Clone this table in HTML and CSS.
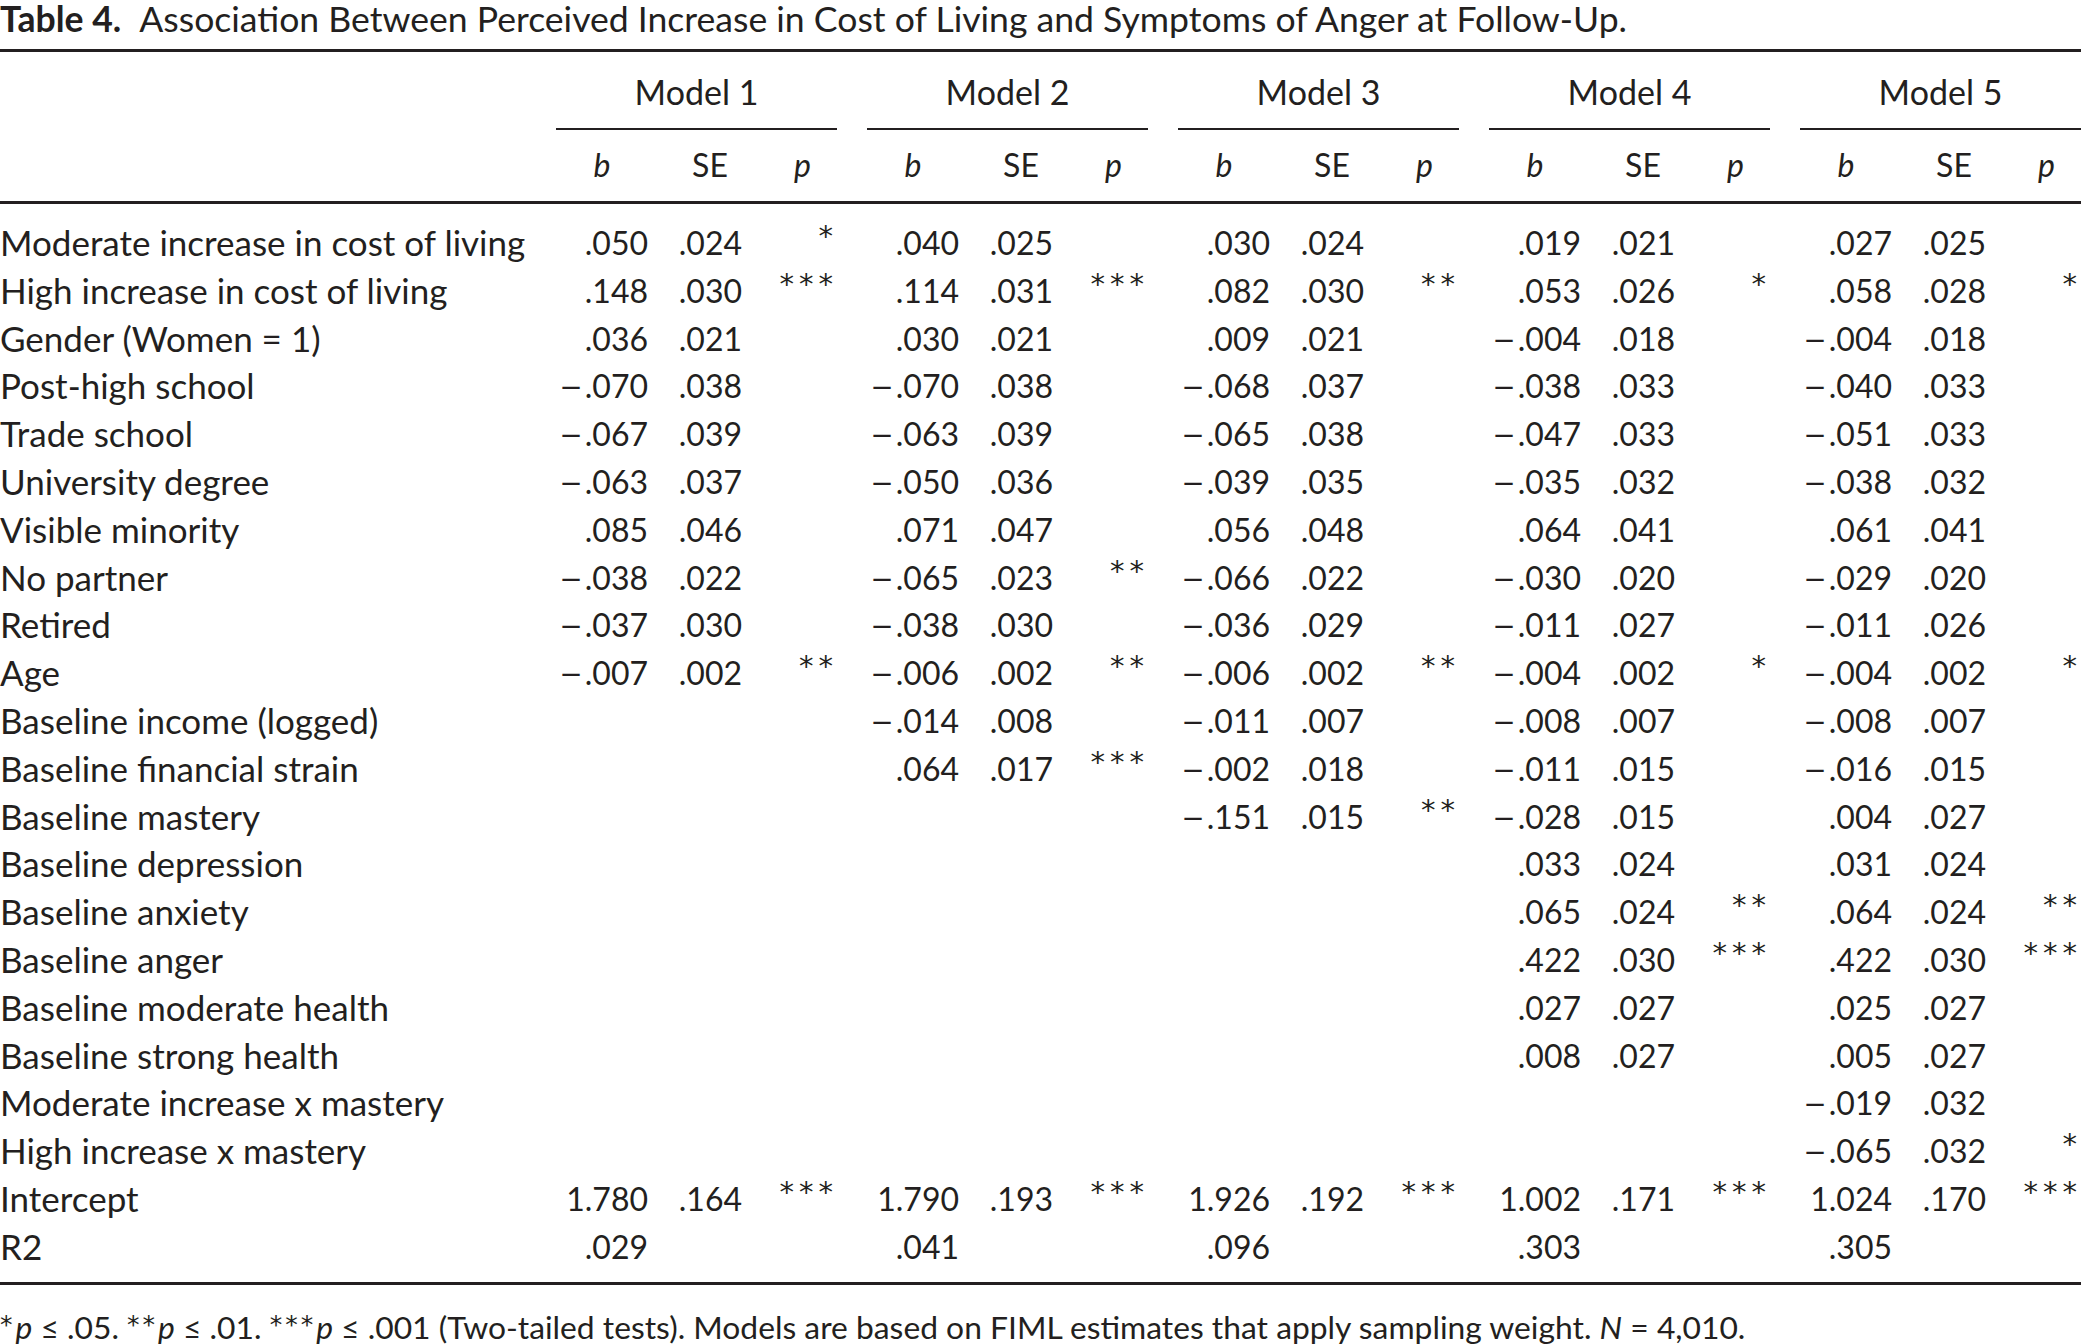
FILE: index.html
```html
<!DOCTYPE html>
<html lang="en">
<head>
<meta charset="utf-8">
<title>Table 4</title>
<link rel="stylesheet" href="styles.css">
</head>
<body>
<div class="page">
  <div class="caption"><span class="caption-label">Table 4.</span>Association Between Perceived Increase in Cost of Living and Symptoms of Anger at Follow-Up.</div>
  <div class="table">
    <div class="head">
      <div class="row models">
        <div class="label"></div>
        <div class="model">Model 1</div>
        <div class="model">Model 2</div>
        <div class="model">Model 3</div>
        <div class="model">Model 4</div>
        <div class="model">Model 5</div>
      </div>
      <div class="row subs">
        <div class="label"></div>
        <div class="grp"><span class="h-b">b</span><span class="h-se">SE</span><span class="h-p">p</span></div>
        <div class="grp"><span class="h-b">b</span><span class="h-se">SE</span><span class="h-p">p</span></div>
        <div class="grp"><span class="h-b">b</span><span class="h-se">SE</span><span class="h-p">p</span></div>
        <div class="grp"><span class="h-b">b</span><span class="h-se">SE</span><span class="h-p">p</span></div>
        <div class="grp"><span class="h-b">b</span><span class="h-se">SE</span><span class="h-p">p</span></div>
      </div>
    </div>
    <div class="body" id="tbody"></div>
  </div>
  <div class="note"><span class="sup">*</span><i>p</i> ≤ .05. <span class="sup">**</span><i>p</i> ≤ .01. <span class="sup">***</span><i>p</i> ≤ .001 (Two-tailed tests). Models are based on FIML estimates that apply sampling weight. <i>N</i> = 4,010.</div>
</div>
<script src="app.js"></script>
</body>
</html>
```
FILE: app.js
```js
var M = '-';
var rows = [
  ["Moderate increase in cost of living", [".050",".024","*"],[".040",".025",""],[".030",".024",""],[".019",".021",""],[".027",".025",""]],
  ["High increase in cost of living", [".148",".030","***"],[".114",".031","***"],[".082",".030","**"],[".053",".026","*"],[".058",".028","*"]],
  ["Gender (Women = 1)", [".036",".021",""],[".030",".021",""],[".009",".021",""],[M+".004",".018",""],[M+".004",".018",""]],
  ["Post-high school", [M+".070",".038",""],[M+".070",".038",""],[M+".068",".037",""],[M+".038",".033",""],[M+".040",".033",""]],
  ["Trade school", [M+".067",".039",""],[M+".063",".039",""],[M+".065",".038",""],[M+".047",".033",""],[M+".051",".033",""]],
  ["University degree", [M+".063",".037",""],[M+".050",".036",""],[M+".039",".035",""],[M+".035",".032",""],[M+".038",".032",""]],
  ["Visible minority", [".085",".046",""],[".071",".047",""],[".056",".048",""],[".064",".041",""],[".061",".041",""]],
  ["No partner", [M+".038",".022",""],[M+".065",".023","**"],[M+".066",".022",""],[M+".030",".020",""],[M+".029",".020",""]],
  ["Retired", [M+".037",".030",""],[M+".038",".030",""],[M+".036",".029",""],[M+".011",".027",""],[M+".011",".026",""]],
  ["Age", [M+".007",".002","**"],[M+".006",".002","**"],[M+".006",".002","**"],[M+".004",".002","*"],[M+".004",".002","*"]],
  ["Baseline income (logged)", ["","",""],[M+".014",".008",""],[M+".011",".007",""],[M+".008",".007",""],[M+".008",".007",""]],
  ["Baseline financial strain", ["","",""],[".064",".017","***"],[M+".002",".018",""],[M+".011",".015",""],[M+".016",".015",""]],
  ["Baseline mastery", ["","",""],["","",""],[M+".151",".015","**"],[M+".028",".015",""],[".004",".027",""]],
  ["Baseline depression", ["","",""],["","",""],["","",""],[".033",".024",""],[".031",".024",""]],
  ["Baseline anxiety", ["","",""],["","",""],["","",""],[".065",".024","**"],[".064",".024","**"]],
  ["Baseline anger", ["","",""],["","",""],["","",""],[".422",".030","***"],[".422",".030","***"]],
  ["Baseline moderate health", ["","",""],["","",""],["","",""],[".027",".027",""],[".025",".027",""]],
  ["Baseline strong health", ["","",""],["","",""],["","",""],[".008",".027",""],[".005",".027",""]],
  ["Moderate increase x mastery", ["","",""],["","",""],["","",""],["","",""],[M+".019",".032",""]],
  ["High increase x mastery", ["","",""],["","",""],["","",""],["","",""],[M+".065",".032","*"]],
  ["Intercept", ["1.780",".164","***"],["1.790",".193","***"],["1.926",".192","***"],["1.002",".171","***"],["1.024",".170","***"]],
  ["R2", [".029","",""],[".041","",""],[".096","",""],[".303","",""],[".305","",""]]
];
function numCell(cls, val) {
  var c = document.createElement('span');
  c.className = cls;
  if (val.charAt(0) === '-') {
    var n = document.createElement('span');
    n.className = 'neg';
    n.textContent = '\u2013';
    c.appendChild(n);
    c.appendChild(document.createTextNode(val.slice(1)));
  } else {
    c.textContent = val;
  }
  return c;
}
var tb = document.getElementById('tbody');
rows.forEach(function (r) {
  var row = document.createElement('div');
  row.className = 'row data';
  var lab = document.createElement('div');
  lab.className = 'label';
  lab.textContent = r[0];
  row.appendChild(lab);
  for (var g = 1; g <= 5; g++) {
    var grp = document.createElement('div');
    grp.className = 'grp';
    grp.appendChild(numCell('c-b', r[g][0]));
    grp.appendChild(numCell('c-se', r[g][1]));
    var p = document.createElement('span');
    p.className = 'c-p';
    p.textContent = r[g][2];
    grp.appendChild(p);
    row.appendChild(grp);
  }
  tb.appendChild(row);
});
```
FILE: styles.css
```css
html, body {
  margin: 0;
  padding: 0;
  background: #ffffff;
}
body {
  color: #231f20;
  font-family: "Lato", "Noto Sans", "DejaVu Sans", sans-serif;
}
.page {
  width: 2081px;
}
.caption {
  font-size: 35.6px;
  line-height: 37px;
  height: 37px;
  margin-bottom: 12px;
  white-space: nowrap;
}
.caption-label {
  font-weight: 700;
  margin-right: 18px;
}
.table {
  border-top: 3px solid #231f20;
  border-bottom: 3px solid #231f20;
  font-size: 32px;
}
.row {
  display: grid;
  grid-template-columns: 526px repeat(5, 281px);
  column-gap: 30px;
  white-space: nowrap;
}
.models {
  padding-top: 16px;
}
.model {
  text-align: center;
  font-size: 34px;
  line-height: 48px;
  padding-bottom: 12px;
  border-bottom: 2px solid #231f20;
}
.subs {
  padding-top: 11px;
  padding-bottom: 12px;
  border-bottom: 3px solid #231f20;
  line-height: 48px;
}
.grp {
  display: grid;
  grid-template-columns: 92px 94px 95px;
}
.h-b, .h-p {
  font-style: italic;
  text-align: center;
}
.h-se {
  text-align: center;
  padding-left: 30px;
}
.h-p {
  padding-left: 26px;
}
.body {
  padding-top: 15px;
  padding-bottom: 11px;
}
.data {
  height: 47.8px;
  line-height: 47.8px;
}
.label {
  font-size: 35px;
}
.c-b, .c-se {
  text-align: right;
}
.neg {
  display: inline-block;
  margin-right: 1px;
  transform: scaleX(1.35);
  transform-origin: right center;
}
.c-p {
  text-align: right;
  padding-right: 4px;
  font-family: "DejaVu Sans", sans-serif;
  font-size: 29px;
  letter-spacing: 5px;
  margin-right: -5px;
  position: relative;
  top: -6px;
}
.note {
  margin-top: 22px;
  font-size: 31.8px;
  line-height: 36px;
  white-space: nowrap;
}
.sup {
  font-family: "DejaVu Sans", sans-serif;
  font-size: 25px;
  vertical-align: 6px;
  letter-spacing: 3px;
}
```
